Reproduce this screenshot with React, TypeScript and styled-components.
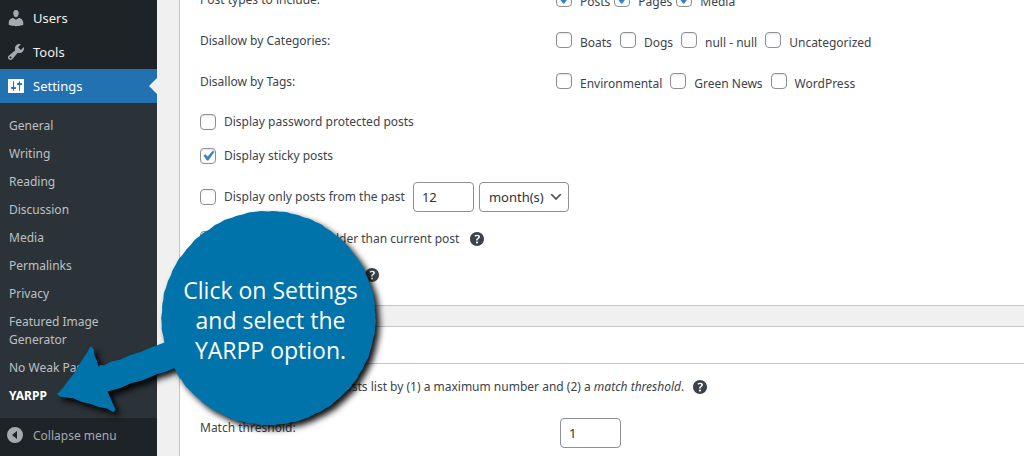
import React from "react";
import styled, { createGlobalStyle, css } from "styled-components";

const GlobalStyle = createGlobalStyle`
  *, *::before, *::after { box-sizing: border-box; }
  html, body { margin: 0; background: #f0f0f1; }
  body {
    overflow: hidden;
    color: #3c434a;
    font: 12px/18px "Segoe UI", "Noto Sans", "Open Sans", sans-serif;
  }
  ul { list-style: none; margin: 0; padding: 0; }
`;

const Page = styled.div`
  position: relative;
  display: flex;
  height: 100vh;
  overflow: hidden;
`;

/* ---------- Sidebar ---------- */

const Sidebar = styled.nav`
  flex: 0 0 157px;
  padding-top: 1px;
  background: #1d2327;
`;

const menuRow = css`
  display: flex;
  align-items: center;
  gap: 7px;
  width: 100%;
  height: 34px;
  padding: 0 0 0 6px;
  border: 0;
  font-family: inherit;
  text-decoration: none;
  cursor: pointer;
`;

const MenuLink = styled.a<{ $current?: boolean }>`
  ${menuRow}
  position: relative;
  font-size: 13px;
  color: ${(p) => (p.$current ? "#fff" : "#f0f0f1")};
  background: ${(p) => (p.$current ? "#2271b1" : "transparent")};
  svg { color: ${(p) => (p.$current ? "#fff" : "#a7aaad")}; }
  ${(p) =>
    p.$current &&
    css`
      &::after {
        content: "";
        position: absolute;
        right: 0;
        top: 9px;
        border: 8px solid transparent;
        border-left-width: 0;
        border-right-color: #f0f0f1;
      }
    `}
`;

const CollapseButton = styled.button`
  ${menuRow}
  font-size: 12px;
  color: #a7aaad;
  background: transparent;
`;

const Submenu = styled.ul`
  && { padding: 9px 0 8px; }
  background: #2c3338;
`;

const SubmenuLink = styled.a<{ $current?: boolean }>`
  display: block;
  padding: 5px 9px;
  font-size: 12px;
  line-height: 18px;
  text-decoration: none;
  color: ${(p) => (p.$current ? "#fff" : "#bcc0c4")};
  font-weight: ${(p) => (p.$current ? 700 : 400)};
`;

const Dashicon = styled.svg.attrs({ viewBox: "0 0 20 20", "aria-hidden": true })`
  flex: none;
  width: 20px;
  height: 20px;
  fill: currentColor;
`;

/* ---------- Settings panels ---------- */

const Content = styled.main`
  flex: 1;
  min-width: 0;
  margin-top: -22px;
  padding-left: 22px;
`;

const Panel = styled.section`
  margin-bottom: 20px;
  border: 1px solid #c3c4c7;
  border-right: 0;
  background: #fff;
`;

const PanelHeader = styled.header`
  height: 37px;
  border-bottom: 1px solid #c3c4c7;
`;

const PanelBody = styled.div`
  padding: 0 20px 12px;
`;

const FieldRow = styled.div`
  display: grid;
  grid-template-columns: 356px 1fr;
  align-items: center;
  height: 41px;
`;

const ThresholdRow = styled.div`
  display: grid;
  grid-template-columns: 360px 1fr;
  align-items: center;
  > label { padding-bottom: 10px; }
`;

const Options = styled.div<{ $gap: number }>`
  display: flex;
  gap: ${(p) => p.$gap}px;
`;

const OptionLabel = styled.label`
  display: flex;
  align-items: center;
  gap: 8px;
  padding-top: 4px;
  white-space: nowrap;
  > span:first-child { margin-top: -5px; }
`;

const Toggles = styled.div`
  padding-top: 3px;
`;

const ToggleRow = styled.div<{ $height: number }>`
  display: flex;
  align-items: center;
  gap: 5px;
  height: ${(p) => p.$height}px;
  white-space: nowrap;
`;

const ToggleLabel = styled.label`
  display: flex;
  align-items: center;
  gap: 8px;
  margin-right: 3px;
`;

const Stack = styled.span`
  display: inline-grid;
  align-items: center;
  > * { grid-area: 1 / 1; }
  > svg { pointer-events: none; }
`;

const CheckInput = styled.input`
  appearance: none;
  width: 16px;
  height: 16px;
  margin: 0;
  border: 1px solid #8c8f94;
  border-radius: 4px;
  background: #fff;
  box-shadow: inset 0 1px 2px rgba(0, 0, 0, 0.1);
  & + svg { visibility: hidden; }
  &:checked + svg { visibility: visible; }
`;

const CheckMark = styled.svg`
  width: 20px;
  height: 20px;
  margin: -2px;
  fill: #3582c4;
  stroke: #3582c4;
  stroke-width: 0.5;
`;

const TextInput = styled.input`
  width: 61px;
  height: 30px;
  padding: 0 8px;
  border: 1px solid #8c8f94;
  border-radius: 4px;
  background: #fff;
  color: #2c3338;
  font: 13px/28px "Segoe UI", "Noto Sans", sans-serif;
`;

const Select = styled.select`
  appearance: none;
  width: 90px;
  height: 30px;
  padding: 0 22px 0 9px;
  border: 1px solid #8c8f94;
  border-radius: 4px;
  background: #fff;
  color: #2c3338;
  font: 13px/28px "Segoe UI", "Noto Sans", sans-serif;
`;

const Chevron = styled.svg`
  justify-self: end;
  width: 16px;
  height: 16px;
  margin-right: 5px;
  fill: #50575e;
`;

const Intro = styled.p`
  display: flex;
  align-items: center;
  gap: 6px;
  margin: 13px 0 21px;
  white-space: nowrap;
`;

/* ---------- Callout ---------- */

const Callout = styled.aside`
  position: absolute;
  z-index: 1;
  left: 52px;
  top: 206px;
  display: grid;
  pointer-events: none;
  > * { grid-area: 1 / 1; }
`;

const CalloutShape = styled.svg`
  width: 340px;
  height: 240px;
  fill: #0073aa;
  filter: drop-shadow(4px 4px 3px rgba(0, 0, 0, 0.95));
`;

const CalloutText = styled.p`
  z-index: 1;
  width: 215px;
  margin: 69px 0 0 111px;
  color: #fff;
  font: 23px/30px "Segoe UI", "Open Sans", "Noto Sans", sans-serif;
  text-align: center;
  white-space: nowrap;
`;

const USERS =
  "M10 9.25c-2.27 0-2.73-3.44-2.73-3.44C7 4.02 7.82 2 9.97 2c2.16 0 2.98 2.02 2.71 3.81 0 0-.41 3.44-2.68 3.44zm0 2.57L12.72 10c2.39 0 4.52 2.33 4.52 4.53v2.49s-3.65 1.13-7.24 1.13c-3.65 0-7.24-1.13-7.24-1.13v-2.49c0-2.25 1.94-4.48 4.47-4.48z";
const TOOLS =
  "M16.68 9.77c-1.34 1.34-3.3 1.67-4.95.99l-5.41 6.52c-.99.99-2.59.99-3.58 0s-.99-2.59 0-3.57l6.52-5.42c-.68-1.65-.35-3.61.99-4.95 1.28-1.28 3.12-1.62 4.72-1.06l-2.89 2.89 2.82 2.82 2.86-2.87c.53 1.58.18 3.39-1.08 4.65zM3.81 16.21c.4.39 1.04.39 1.43 0 .4-.4.4-1.04 0-1.43-.39-.4-1.03-.4-1.43 0-.39.39-.39 1.03 0 1.43z";
const SETTINGS =
  "M18 17V3H2v14h16zM8 11h1c.55 0 1 .45 1 1s-.45 1-1 1H8v1.5c0 .28-.22.5-.5.5s-.5-.22-.5-.5V13H6c-.55 0-1-.45-1-1s.45-1 1-1h1V5.5c0-.28.22-.5.5-.5s.5.22.5.5V11zm5-2h-1c-.55 0-1-.45-1-1s.45-1 1-1h1V5.5c0-.28.22-.5.5-.5s.5.22.5.5V7h1c.55 0 1 .45 1 1s-.45 1-1 1h-1v5.5c0 .28-.22.5-.5.5s-.5-.22-.5-.5V9z";
const COLLAPSE = "M9 2a8 8 0 1 0 0 16a8 8 0 0 0 0-16zM11 6v8l-5-4z";
const HELP =
  "M17 10c0-3.87-3.14-7-7-7-3.87 0-7 3.13-7 7s3.13 7 7 7c3.86 0 7-3.13 7-7zm-6.3 1.48H9.14v-.43c0-.38.08-.7.24-.98s.46-.57.88-.89c.41-.29.68-.53.81-.71.14-.18.2-.39.2-.62 0-.25-.09-.44-.28-.58-.19-.13-.45-.19-.79-.19-.58 0-1.25.19-2 .57l-.64-1.28c.87-.49 1.8-.74 2.77-.74.81 0 1.45.2 1.92.58.48.39.71.91.71 1.55 0 .43-.09.8-.29 1.11-.19.32-.57.67-1.11 1.06-.38.28-.61.49-.71.63-.1.15-.15.34-.15.57v.35zm-1.47 2.74c-.18-.17-.27-.42-.27-.73 0-.33.08-.58.26-.75s.43-.25.77-.25c.32 0 .57.09.75.26s.27.42.27.74c0 .3-.09.55-.27.72-.18.18-.43.27-.75.27-.33 0-.58-.09-.76-.26z";

const Icon = ({ d }: { d: string }) => (
  <Dashicon>
    <path fillRule="evenodd" d={d} />
  </Dashicon>
);

const Check = ({ checked }: { checked?: boolean }) => (
  <Stack>
    <CheckInput type="checkbox" defaultChecked={checked} />
    <CheckMark viewBox="0 0 20 20" aria-hidden>
      <path d="M14.83 4.89l1.34.94-5.81 8.38H9.02L5.78 9.67l1.34-1.25 2.57 2.4z" />
    </CheckMark>
  </Stack>
);

const Option = ({ text, checked }: { text: string; checked?: boolean }) => (
  <OptionLabel>
    <Check checked={checked} />
    <span>{text}</span>
  </OptionLabel>
);

const Toggle = ({ text, checked }: { text: string; checked?: boolean }) => (
  <ToggleLabel>
    <Check checked={checked} />
    <span>{text}</span>
  </ToggleLabel>
);

/* Circle outline with a slightly ragged, hand-cut edge. */
const roughCircle = (cx: number, cy: number, r: number) => {
  const points: string[] = [];
  for (let i = 0; i < 180; i++) {
    const a = (i / 180) * Math.PI * 2;
    const rr = r + 0.3 * Math.sin(i * 1.9) + 0.2 * Math.sin(i * 0.73);
    points.push(`${(cx + rr * Math.cos(a)).toFixed(1)} ${(cy + rr * Math.sin(a)).toFixed(1)}`);
  }
  return `M${points.join("L")}Z`;
};

const submenu = [
  "General",
  "Writing",
  "Reading",
  "Discussion",
  "Media",
  "Permalinks",
  "Privacy",
  "Featured Image Generator",
  "No Weak Passwords",
  "YARPP",
];

export default function App() {
  return (
    <Page>
      <GlobalStyle />
      <Sidebar>
        <MenuLink href="#users"><Icon d={USERS} />Users</MenuLink>
        <MenuLink href="#tools"><Icon d={TOOLS} />Tools</MenuLink>
        <MenuLink href="#settings" $current><Icon d={SETTINGS} />Settings</MenuLink>
        <Submenu>
          {submenu.map((item) => (
            <li key={item}>
              <SubmenuLink href="#page" $current={item === "YARPP"}>{item}</SubmenuLink>
            </li>
          ))}
        </Submenu>
        <CollapseButton type="button"><Icon d={COLLAPSE} />Collapse menu</CollapseButton>
      </Sidebar>

      <Content>
        <Panel>
          <PanelBody>
            <FieldRow>
              <span>Post types to include:</span>
              <Options $gap={4}>
                <Option text="Posts" checked />
                <Option text="Pages" checked />
                <Option text="Media" checked />
              </Options>
            </FieldRow>
            <FieldRow>
              <span>Disallow by Categories:</span>
              <Options $gap={8}>
                <Option text="Boats" />
                <Option text="Dogs" />
                <Option text="null - null" />
                <Option text="Uncategorized" />
              </Options>
            </FieldRow>
            <FieldRow>
              <span>Disallow by Tags:</span>
              <Options $gap={8}>
                <Option text="Environmental" />
                <Option text="Green News" />
                <Option text="WordPress" />
              </Options>
            </FieldRow>
            <Toggles>
              <ToggleRow $height={34}><Toggle text="Display password protected posts" /></ToggleRow>
              <ToggleRow $height={34}><Toggle text="Display sticky posts" checked /></ToggleRow>
              <ToggleRow $height={48}>
                <Toggle text="Display only posts from the past" />
                <TextInput type="text" defaultValue="12" aria-label="Number of months" />
                <Stack>
                  <Select aria-label="Period" defaultValue="month(s)">
                    <option>day(s)</option>
                    <option>week(s)</option>
                    <option>month(s)</option>
                  </Select>
                  <Chevron viewBox="0 0 20 20" aria-hidden>
                    <path d="M5 6l5 5 5-5 2 1-7 7-7-7 2-1z" />
                  </Chevron>
                </Stack>
              </ToggleRow>
              <ToggleRow $height={36}>
                <Toggle text="Display only posts older than current post" />
                <Icon d={HELP} />
              </ToggleRow>
              <ToggleRow $height={36}>
                <Toggle text="Display same post type" />
                <Icon d={HELP} />
              </ToggleRow>
            </Toggles>
          </PanelBody>
        </Panel>

        <Panel>
          <PanelHeader />
          <PanelBody>
            <Intro>
              <span>
                YARPP limits the related posts list by (1) a maximum number and (2) a <em>match threshold</em>.
              </span>
              <Icon d={HELP} />
            </Intro>
            <ThresholdRow>
              <label htmlFor="threshold">Match threshold:</label>
              <TextInput id="threshold" type="text" defaultValue="1" />
            </ThresholdRow>
          </PanelBody>
        </Panel>
      </Content>

      <Callout>
        <CalloutShape viewBox="52 206 340 240" aria-hidden>
          <path d={roughCircle(268.5, 318, 107)} />
          <path
            stroke="#0073aa"
            strokeWidth="2"
            strokeLinejoin="round"
            d="M58.5 394L63 389.5L68 382.5L75 374L79 366.5L84 359L88 353L91 347.5L93 350L93.5 356L96 361L97.5 367.5L105 366L112 362.5L121 360.5L131 356L142 352.5L150 349L158 346L165 343.5L180 348L182 364L174 367L165 371L157 373L149 376.5L140 380L130 382.5L120 387L106 391L109 397L111 402L114.5 409.5L113 411L107 407.5L99 406L91 403L82 401L74 397.5L66 396.5L60 395.5Z"
          />
        </CalloutShape>
        <CalloutText>
          Click on Settings
          <br />
          and select the
          <br />
          YARPP option.
        </CalloutText>
      </Callout>
    </Page>
  );
}
